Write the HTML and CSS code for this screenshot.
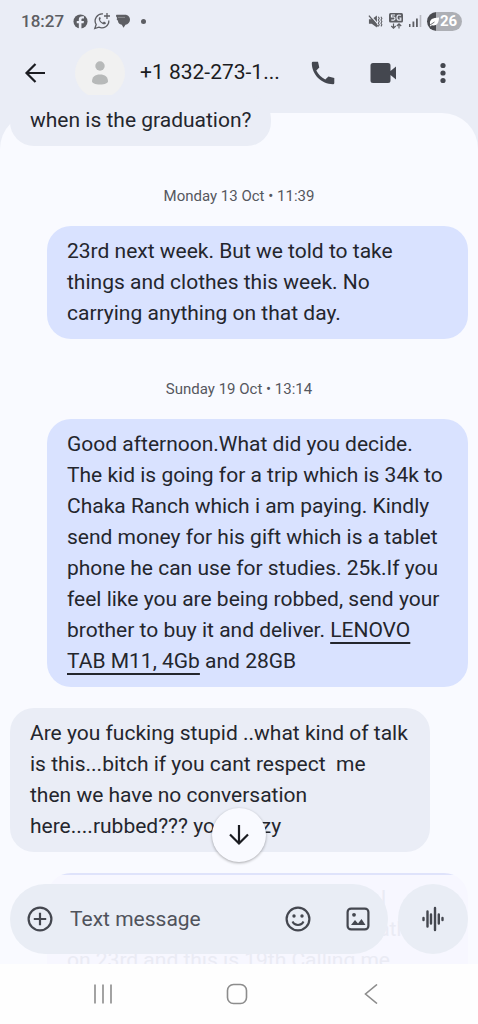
FILE: index.html
```html
<!DOCTYPE html>
<html lang="en">
<head>
<meta charset="utf-8">
<meta name="viewport" content="width=device-width, initial-scale=1">
<title>Messages</title>
<link rel="stylesheet" href="styles.css">
</head>
<body>
<div class="status">
  <time class="clock">18:27</time>
  <svg class="status-icon" width="15" height="15" viewBox="0 0 16 16"><circle cx="8" cy="8" r="7.5" fill="#5d5e63"/><path d="M9 16V9.800h2.300l.4-2.400H9V6c0-.8.4-1.300 1.300-1.300h1.400V2.500c-3.200-.5-5.500.3-5.500 3.200v1.700H4v2.400h2.200V16z" fill="#eaedf6"/></svg>
  <svg class="status-icon" width="18" height="18" viewBox="0 0 18 18" fill="none" stroke="#5d5e63" stroke-width="1.300"><path d="M10 1.900A7 7 0 0 0 3.200 12.500L1.800 16.500l4-1.300A7 7 0 0 0 15.800 8.500"/><path d="M14 1v6M11 4h6"/><path d="M6 5.500c-1.200 2.700 2.500 7.200 5.800 6.800 1.200-.3 1.300-1.500.8-1.900l-1.600-.8-1 1c-1.500-.5-2.500-1.700-3-2.900l.8-1-.7-1.600z" fill="#5d5e63" stroke="none"/></svg>
  <svg class="status-icon" width="14" height="14" viewBox="0 0 14 14" fill="#5d5e63"><path d="M1 .8h8C12 .8 14 3 14 5.800c0 2.600-2 4.600-4.500 5L7.500 13.800 5.800 10.800C3.500 10.600 2 9 1.900 6.800L.6 5.200 1.200 4 0 2.200C0 1.300.3.800 1 .8z"/><path d="M2 3.400h7" stroke="#a0a2a8" stroke-width=".7"/></svg>
  <span class="more-dot"></span>
  <span class="status-right">
    <svg width="15" height="15" viewBox="0 0 16 16" fill="#5d5e63"><path d="M1 5.500h3L9.500 1.500v13L4 10.500H1z"/><path d="M2.300 1.200l9 10.500" stroke="#eaedf6" stroke-width="1.300"/><path d="M1 1.800l9.500 11.400" stroke="#5d5e63" stroke-width="1.400"/><path d="M11 3l1 1.700-1 1.700 1 1.700-1 1.700 1 1.700-1 1.700M13.800 3l1 1.700-1 1.700 1 1.700-1 1.700 1 1.700-1 1.700" fill="none" stroke="#5d5e63" stroke-width="1.100"/></svg>
    <svg width="16" height="18" viewBox="0 0 16 18"><rect x="1" y="1" width="14" height="9.500" rx="1.500" fill="#5d5e63"/><path d="M7 3H3.500v2H6q1 .2 1 1.500T5.500 8.200H3.300M12.800 3.500Q12.300 3 11 3 9 3 9 5.700q0 2.500 2 2.500h1.800V6h-1.500" fill="none" stroke="#eaedf6" stroke-width="1.200"/><path d="M5.500 11.500V16M3.300 14l2.200 2.200L7.700 14M11 16.500v-4.500M8.800 14L11 11.800l2.200 2.200" fill="none" stroke="#5d5e63" stroke-width="1.200"/></svg>
    <svg width="13" height="14" viewBox="0 0 13 14" fill="#5d5e63"><rect x="0" y="10" width="1.500" height="3"/><rect x="3.500" y="7.500" width="1.800" height="5.500"/><rect x="7" y="4.500" width="1.800" height="8.500"/><rect x="10.700" y="1" width="1.600" height="12" fill="#b9bbc2"/></svg>
    <span class="battery">
      <svg width="13" height="19" viewBox="0 0 13 19"><path d="M3 12C2.500 7 5.500 6 12 5.500c0 6-3 9-7 7.700L3 14.500z" fill="#fff"/><path d="M3 13l4.500-3" stroke="#4a4b50" stroke-width=".8"/></svg>
      <span>26</span>
    </span>
  </span>
</div>
<header class="appbar">
  <button class="icon-btn back" aria-label="Back"><svg width="24" height="24" viewBox="0 0 24 24" fill="none" stroke="#1b1c21" stroke-width="2.200"><path d="M22 12H3.500M12.500 3L3.500 12l9 9"/></svg></button>
  <span class="avatar"><svg width="18" height="26" viewBox="0 0 18 26" fill="#b7b9b9"><circle cx="9" cy="6" r="4.700"/><path d="M1 21.500C1 17 4 14.500 9 14.500s8 2.500 8 7c0 1.500-3 3-8 3s-8-1.500-8-3z"/></svg></span>
  <h1 class="contact">+1 832-273-1...</h1>
  <button class="icon-btn" aria-label="Call"><svg width="24" height="24" viewBox="0 0 24 24" fill="#44474f"><path d="M2 .8h5l1.300 5.800-3 3c2 4 5 7 9 9l3.100-3 5.900 1.300V22q0 1.200-1.300 1.200C10.500 23.200.8 13.500.8 2Q.8.800 2 .8z"/></svg></button>
  <button class="icon-btn" aria-label="Video call"><svg width="26" height="22" viewBox="0 0 26 22" fill="#44474f"><path d="M3 1h15q2.500 0 2.500 2.500v5.500L26 4.500v13L20.500 13v5.500Q20.500 21 18 21H3Q.5 21 .5 18.500v-15Q.5 1 3 1z"/></svg></button>
  <button class="icon-btn" aria-label="More options"><svg width="6" height="22" viewBox="0 0 6 22" fill="#44474f"><circle cx="3" cy="3.500" r="2.600"/><circle cx="3" cy="11" r="2.600"/><circle cx="3" cy="18.500" r="2.600"/></svg></button>
</header>
<main class="thread">
  <p class="bubble in first">when is the graduation?</p>
  <time class="stamp">Monday 13 Oct • 11:39</time>
  <p class="bubble out">23rd next week. But we told to take<br>things and clothes this week. No<br>carrying anything on that day.</p>
  <time class="stamp">Sunday 19 Oct • 13:14</time>
  <p class="bubble out">Good afternoon.What did you decide.<br>The kid is going for a trip which is 34k to<br>Chaka Ranch which i am paying. Kindly<br>send money for his gift which is a tablet<br>phone he can use for studies. 25k.If you<br>feel like you are being robbed, send your<br>brother to buy it and deliver. <a href="#">LENOVO<br>TAB M11, 4Gb</a> and 28GB</p>
  <p class="bubble in">Are you fucking stupid ..what kind of talk<br>is this...bitch if you cant respect&nbsp; me<br>then we have no conversation<br>here....rubbed??? you crazy</p>
  <button class="jump" aria-label="Scroll to latest"><svg width="20" height="22" viewBox="0 0 20 22" fill="none" stroke="#1b1c21" stroke-width="2.200"><path d="M10 1v18M1 10.500l9 9 9-9"/></svg></button>
  <div class="dock">
    <p class="bubble faded"><span class="tail wide">l</span><span class="tail">ath</span>on 23rd and this is 19th Calling me</p>
    <form class="composer">
      <div class="field">
        <button type="button" class="icon-btn" aria-label="Add"><svg width="26" height="26" viewBox="0 0 26 26" fill="none" stroke="#44474f" stroke-width="2.200"><circle cx="13" cy="13" r="11.400"/><path d="M13 6.800v12.400M6.800 13h12.400"/></svg></button>
        <input type="text" aria-label="Text message" placeholder="Text message">
        <button type="button" class="icon-btn" aria-label="Emoji"><svg width="26" height="26" viewBox="0 0 26 26" fill="none" stroke="#44474f" stroke-width="2.200"><circle cx="13" cy="13" r="11.400"/><path d="M7.500 15.500c2 4.500 9 4.500 11 0" stroke-width="2"/><g fill="#44474f" stroke="none"><circle cx="9" cy="10" r="1.700"/><circle cx="17" cy="10" r="1.700"/></g></svg></button>
        <button type="button" class="icon-btn" aria-label="Gallery"><svg width="24" height="24" viewBox="0 0 24 24"><rect x="1.600" y="1.600" width="20.800" height="20.800" rx="3.500" fill="none" stroke="#44474f" stroke-width="2.200"/><path d="M5 18l4-5 3 3.500L15.500 12l4 6z" fill="#44474f"/><circle cx="8" cy="7.800" r="1.900" fill="#44474f"/></svg></button>
      </div>
      <button type="button" class="voice" aria-label="Record voice message"><svg width="24" height="26" viewBox="0 0 24 26" fill="none" stroke="#44474f" stroke-width="2.400" stroke-linecap="round"><path d="M2.500 12v2M6.500 5.500v15M10 8.500v9M14 2v22M17.800 8.500v9M21.500 12v2"/></svg></button>
    </form>
  </div>
</main>
<nav class="sysnav">
  <button aria-label="Recent apps"><svg width="20" height="20" viewBox="0 0 20 20" stroke="#8c8c8c" stroke-width="1.600"><path d="M2 .5v19M10 .5v19M18 .5v19"/></svg></button>
  <button aria-label="Home"><svg width="22" height="22" viewBox="0 0 22 22" fill="none" stroke="#8c8c8c" stroke-width="1.600"><rect x="1.500" y="1.500" width="19" height="19" rx="6"/></svg></button>
  <button aria-label="Back"><svg width="14" height="20" viewBox="0 0 14 20" fill="none" stroke="#8c8c8c" stroke-width="1.600"><path d="M13 .5L1.500 10 13 19.500"/></svg></button>
</nav>
</body>
</html>
```
FILE: styles.css
```css
* { box-sizing: border-box; }
body {
  margin: 0;
  min-height: 100vh;
  display: flex;
  flex-direction: column;
  background: #eaedf6;
  color: #24262d;
  font-family: Roboto, "Liberation Sans", sans-serif;
  font-size: 21px;
  line-height: 31px;
}
button {
  border: 0;
  padding: 0;
  background: none;
  display: flex;
  align-items: center;
  justify-content: center;
}
svg { display: block; flex: none; }

.status {
  height: 42px;
  padding: 0 16px 0 21px;
  display: flex;
  align-items: center;
  color: #5d5e63;
  font-size: 17px;
  font-weight: 500;
}
.clock { margin-right: 9px; }
.status-icon { margin-right: 5px; }
.more-dot {
  width: 5px;
  height: 5px;
  margin-left: 6px;
  border-radius: 50%;
  background: #5d5e63;
}
.status-right {
  margin-left: auto;
  display: flex;
  align-items: center;
  gap: 5px;
}
.battery {
  display: flex;
  align-items: center;
  height: 19px;
  width: 35px;
  border-radius: 10px;
  overflow: hidden;
  background: linear-gradient(90deg, #4a4b50 9px, #adafb5 9px);
  color: #fff;
  font-size: 15px;
  font-weight: 700;
}

.appbar {
  height: 71px;
  padding: 0 20px 10px 20px;
  display: flex;
  align-items: center;
}
.icon-btn { flex: none; width: 30px; height: 48px; }
.avatar {
  width: 50px;
  height: 50px;
  margin: 0 15px 0 25px;
  border-radius: 50%;
  background: #f1f1f1;
  display: flex;
  align-items: center;
  justify-content: center;
}
.contact {
  flex: 1;
  margin: 0;
  font-size: 21px;
  font-weight: 400;
  color: #1b1c21;
}
.appbar .icon-btn + .icon-btn { margin-left: 30px; }

.thread {
  position: relative;
  flex: 1;
  display: flex;
  flex-direction: column;
  background: #f9faff;
  border-radius: 36px 36px 0 0;
}
.bubble {
  margin: 0;
  padding: 10px 20px;
  border-radius: 24px;
}
.in {
  align-self: flex-start;
  margin-left: 10px;
  background: #eaedf6;
}
.in:not(.first) { width: calc(100% - 58px); margin-top: 21px; }
.first { margin-top: -18px; }
.out {
  margin: 0 10px 0 47px;
  background: #d9e2ff;
}
.out a { color: inherit; text-underline-offset: 5px; text-decoration-thickness: 2px; }
.stamp {
  padding: 35px 0 14px;
  text-align: center;
  font-size: 15px;
  color: #55575e;
}
.jump {
  position: absolute;
  left: 50%;
  bottom: 102px;
  width: 54px;
  height: 54px;
  margin-left: -27px;
  border-radius: 50%;
  background: #f9faff;
  box-shadow: 0 1px 3px #0005;
}
.dock {
  margin-top: auto;
  height: 91px;
  position: relative;
  overflow: hidden;
}
.faded {
  position: absolute;
  inset: 0 10px auto 47px;
  background: linear-gradient(#dfe3fb 2px, #f7f7ff 2px);
  color: #eaebf4;
  white-space: nowrap;
}
.tail {
  display: block;
  padding-right: 40px;
  text-align: right;
}
.wide { padding-right: 62px; }
.composer {
  position: relative;
  padding: 11px 10px 10px;
  display: flex;
  gap: 10px;
}
.field {
  flex: 1;
  min-width: 0;
  height: 70px;
  padding: 0 15px;
  display: flex;
  align-items: center;
  border-radius: 35px;
  background: #e9edf5;
}
.field input {
  flex: 1;
  min-width: 0;
  margin-left: 15px;
  padding: 0;
  border: 0;
  outline: 0;
  background: none;
  font: inherit;
}
.field input::placeholder { color: #50535b; opacity: 1; }
.field .icon-btn + .icon-btn { margin-left: 30px; }
.voice {
  flex: none;
  width: 70px;
  height: 70px;
  border-radius: 50%;
  background: #e9edf5;
}

.sysnav {
  height: 60px;
  padding: 0 40px 0 36px;
  display: grid;
  grid-template-columns: repeat(3, 1fr);
  background: #fefefe;
}
```
